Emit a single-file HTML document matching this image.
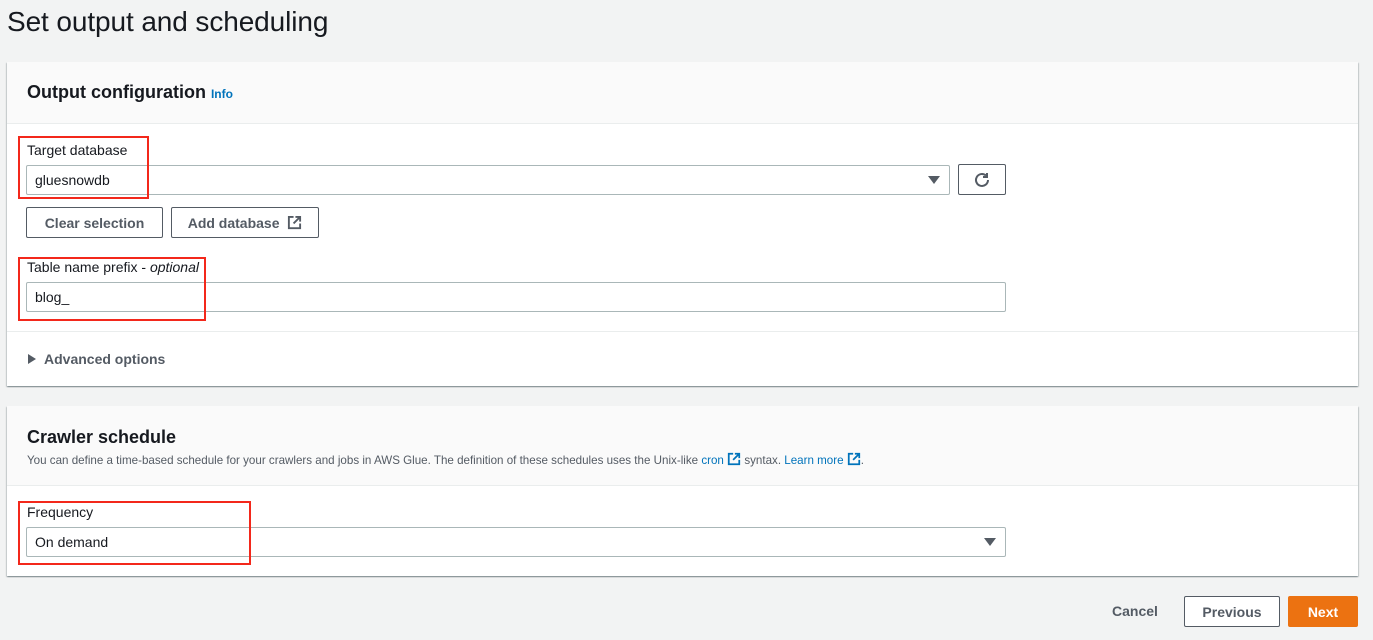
<!DOCTYPE html>
<html><head><meta charset="utf-8"><style>
*{box-sizing:border-box;margin:0;padding:0}
body{width:1373px;height:640px;background:#f2f3f3;font-family:"Liberation Sans",sans-serif;color:#16191f;position:relative;overflow:hidden}
.abs{position:absolute}
.panel{position:absolute;left:7px;width:1351px;background:#fff;box-shadow:0 1px 1px rgba(0,28,36,.3),1px 1px 1px rgba(0,28,36,.15),-1px 1px 1px rgba(0,28,36,.15)}
.hdr{position:absolute;left:0;top:0;width:100%;background:#fafafa;border-bottom:1px solid #eaeded}
.input{position:absolute;border:1px solid #aab7b8;border-radius:2px;background:#fff;font-size:14px;padding-left:8px;display:flex;align-items:center}
.btn{position:absolute;border:1px solid #545b64;border-radius:2px;background:#fff;font-size:14px;font-weight:bold;color:#545b64;display:flex;align-items:center;justify-content:center}
.red{position:absolute;border:2.5px solid #f3281b}
.lbl{position:absolute;font-size:14px}
.caret{position:absolute;width:0;height:0;border-left:6px solid transparent;border-right:6px solid transparent;border-top:8px solid #545b64}
a{color:#0073bb;text-decoration:none}
</style></head><body>
<div class="abs" style="left:7px;top:6px;font-size:28px;color:#16191f;letter-spacing:-0.1px">Set output and scheduling</div>

<div class="panel" style="top:62px;height:324px">
  <div class="hdr" style="height:62px"></div>
  <div class="abs" style="left:20px;top:20px;font-size:18px;font-weight:bold">Output configuration <a style="font-size:12px;font-weight:bold;margin-left:0">Info</a></div>
  <div class="abs" style="left:0;top:269px;width:100%;border-top:1px solid #eaeded"></div>
</div>

<div class="lbl" style="left:27px;top:142px">Target database</div>
<div class="input" style="left:26px;top:165px;width:924px;height:30px">gluesnowdb</div>
<div class="caret" style="left:928px;top:176px"></div>
<div class="btn" style="left:958px;top:164px;width:48px;height:31px">
<svg width="18" height="18" viewBox="0 0 18 18" fill="none" stroke="#545b64" stroke-width="2"><path d="M15 9a6 6 0 1 1-2-4.5"/><path d="M14 2v4h-4" stroke-linejoin="miter"/></svg></div>
<div class="btn" style="left:26px;top:207px;width:137px;height:31px">Clear selection</div>
<div class="btn" style="left:171px;top:207px;width:148px;height:31px">Add database&nbsp;&nbsp;<svg width="15" height="15" viewBox="0 0 16 16" fill="none" stroke="#545b64" stroke-width="2"><path d="M7 2H2v12h12V9"/><path d="M9 2h5v5M14 2L7 9"/></svg></div>
<div class="red" style="left:18px;top:136px;width:131px;height:63px"></div>

<div class="lbl" style="left:27px;top:259px">Table name prefix - <i>optional</i></div>
<div class="input" style="left:26px;top:282px;width:980px;height:30px">blog_</div>
<div class="red" style="left:18px;top:257px;width:188px;height:64px"></div>

<div class="abs" style="left:28px;top:354px;width:0;height:0;border-top:5px solid transparent;border-bottom:5px solid transparent;border-left:8px solid #545b64"></div>
<div class="abs" style="left:44px;top:351px;font-size:14px;font-weight:bold;color:#545b64">Advanced options</div>

<div class="panel" style="top:406px;height:170px">
  <div class="hdr" style="height:80px"></div>
  <div class="abs" style="left:20px;top:21px;font-size:18px;font-weight:bold">Crawler schedule</div>
  <div class="abs" style="left:20px;top:46px;font-size:11.6px;color:#545b64;white-space:nowrap">You can define a time-based schedule for your crawlers and jobs in AWS Glue. The definition of these schedules uses the Unix-like <a>cron <svg width="14" height="14" viewBox="0 0 16 16" fill="none" stroke="#0073bb" stroke-width="2" style="vertical-align:-2px"><path d="M7 2H2v12h12V9"/><path d="M9 2h5v5M14 2L7 9"/></svg></a> syntax. <a>Learn more <svg width="14" height="14" viewBox="0 0 16 16" fill="none" stroke="#0073bb" stroke-width="2" style="vertical-align:-2px"><path d="M7 2H2v12h12V9"/><path d="M9 2h5v5M14 2L7 9"/></svg></a>.</div>
</div>
<div class="lbl" style="left:27px;top:504px">Frequency</div>
<div class="input" style="left:26px;top:527px;width:980px;height:30px">On demand</div>
<div class="caret" style="left:984px;top:538px"></div>
<div class="red" style="left:18px;top:501px;width:233px;height:64px"></div>

<div class="abs" style="left:1112px;top:603px;font-size:14px;font-weight:bold;color:#545b64">Cancel</div>
<div class="btn" style="left:1184px;top:596px;width:96px;height:31px">Previous</div>
<div class="btn" style="left:1288px;top:596px;width:70px;height:31px;background:#ec7211;border-color:#ec7211;color:#fff">Next</div>
</body></html>
